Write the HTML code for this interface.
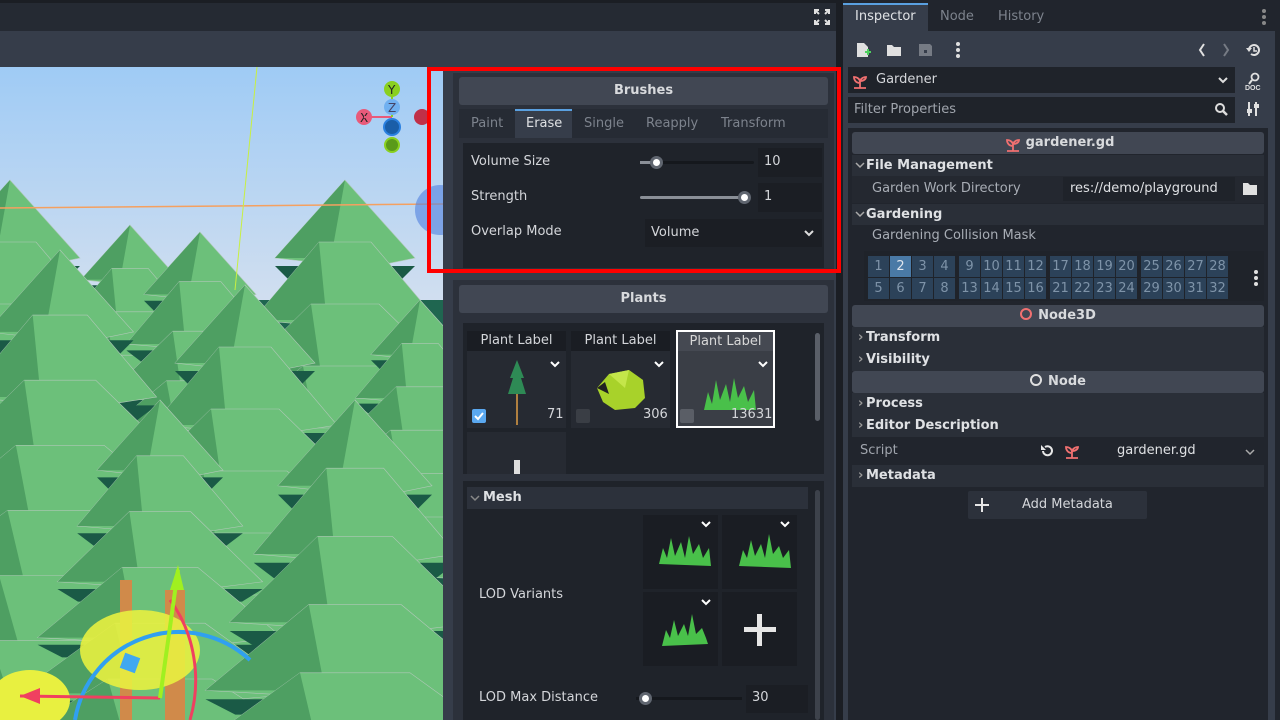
<!DOCTYPE html>
<html><head><meta charset="utf-8"><style>
*{box-sizing:border-box;margin:0;padding:0}
html{width:1280px;height:720px;overflow:hidden}
body{width:1280px;height:720px;overflow:hidden;background:#21252d;font-family:"DejaVu Sans","Liberation Sans",sans-serif;font-size:13px;color:#d4d6da;position:relative}
.a{position:absolute}
.hdr{background:#414753;border-radius:3px;text-align:center;font-weight:bold;color:#d8dadd}
.box{background:#1f232a}
.t{white-space:nowrap}
.sec{background:#2a2f38;font-weight:bold;color:#dfe1e4}
.cell{position:absolute;width:21px;height:21px;background:#2c4259;color:#7e93a8;font-size:13px;text-align:center;line-height:21px}
</style></head><body>
<div class="a" style="left:0;top:0;width:836px;height:3px;background:#1b1e24"></div>
<div class="a" style="left:0;top:3px;width:836px;height:28px;background:#252a33"></div>
<div class="a" style="left:0;top:31px;width:836px;height:36px;background:#363d4a"></div>
<svg class="a" style="left:814px;top:9px" width="16" height="16" viewBox="0 0 16 16" fill="none" stroke="#e0e0e0" stroke-width="2"><path d="M1 5V1h4M11 1h4v4M15 11v4h-4M5 15H1v-4M1 1l4 4M15 1l-4 4M15 15l-4-4M1 15l4-4"/></svg>
<svg class="a" id="vp" style="left:0;top:67px" width="443" height="653" viewBox="0 67 443 653">
<defs><linearGradient id="sky" x1="0" y1="0" x2="0" y2="1"><stop offset="0" stop-color="#9fcbf5"/><stop offset="1" stop-color="#dfe4ee"/></linearGradient></defs>
<rect x="0" y="67" width="443" height="300" fill="url(#sky)"/>
<rect x="0" y="300" width="443" height="420" fill="#1f6650"/>
<rect x="395" y="400" width="48" height="200" fill="#8fc4e8"/>
<g id="trees"></g>
<line x1="0" y1="208" x2="443" y2="204" stroke="#f5a060" stroke-width="1.5"/>
<line x1="257" y1="67" x2="235" y2="290" stroke="#c8f040" stroke-width="1"/>
<rect x="120" y="580" width="12" height="140" fill="#d08a4a"/>
<rect x="165" y="590" width="20" height="130" fill="#d08a4a"/>
<ellipse cx="140" cy="650" rx="60" ry="40" fill="#e8f040" opacity=".9"/>
<ellipse cx="30" cy="700" rx="40" ry="30" fill="#e8f040"/>
<path d="M75 720A105 105 0 0 1 250 660" stroke="#30a0f0" stroke-width="4" fill="none"/>
<path d="M170 600A100 120 0 0 1 190 720" stroke="#f04060" stroke-width="3" fill="none"/>
<line x1="20" y1="696" x2="160" y2="698" stroke="#f04060" stroke-width="3"/>
<path d="M20 696l20-8v16z" fill="#f04060"/>
<line x1="160" y1="698" x2="178" y2="570" stroke="#a0f020" stroke-width="4"/>
<path d="M178 565l-8 25h14z" fill="#a0f020"/>
<rect x="122" y="655" width="16" height="16" fill="#40a8f0" transform="rotate(20 130 663)"/>
<circle cx="364" cy="117" r="8" fill="#e85a7a"/><text x="360" y="122" font-size="12" fill="#222">X</text>
<line x1="364" y1="117" x2="392" y2="117" stroke="#e85a7a" stroke-width="2"/>
<line x1="392" y1="89" x2="392" y2="117" stroke="#8ad020" stroke-width="2"/>
<circle cx="392" cy="89" r="8" fill="#8ad020"/><text x="388" y="94" font-size="12" fill="#222">Y</text>
<circle cx="392" cy="107" r="8" fill="#70b0f0"/><text x="388" y="112" font-size="12" fill="#446">Z</text>
<circle cx="392" cy="127" r="8" fill="#1a5ea8" stroke="#2a80e0" stroke-width="2"/>
<circle cx="392" cy="145" r="7" fill="#5a9a1a" stroke="#8ad020" stroke-width="2"/>
<circle cx="422" cy="117" r="8" fill="#c03048"/>
<circle cx="440" cy="210" r="25" fill="#5080e0" opacity=".6"/>
</svg>
<script>
(function(){var g=document.getElementById('trees'),s='';
function tree(cx,y0,n,sc){for(var i=0;i<n;i++){var ty=y0+i*62*sc,h=78*sc,tw=(i==0?0:(18+i*8))*sc,bw=(70+i*22)*sc,by=ty+h;
s+='<polygon points="'+(cx-bw)+','+(by+8*sc)+' '+(cx+bw)+','+(by+8*sc)+' '+(cx+bw*0.8)+','+(by+22*sc)+' '+(cx-bw*0.8)+','+(by+22*sc)+'" fill="#1a5a46"/>';
s+='<polygon points="'+(cx-tw)+','+ty+' '+(cx+tw)+','+ty+' '+(cx+bw)+','+by+' '+(cx+bw*0.3)+','+(by+10*sc)+' '+(cx-bw)+','+by+'" fill="#6cc07a" stroke="#b0c8b8" stroke-width="0.6"/>';
s+='<polygon points="'+(cx-tw)+','+ty+' '+(cx-bw*0.2)+','+by+' '+(cx-bw)+','+by+'" fill="#4e9f62"/>';}}
tree(10,180,9,1);tree(130,225,6,0.7);tree(200,232,7,0.8);tree(345,180,9,1);tree(245,285,8,1);tree(60,250,8,1.05);tree(420,300,6,0.7);tree(160,400,6,0.9);tree(355,400,6,1.1);
g.innerHTML=s;})();
</script>
<div class="a" style="left:443px;top:67px;width:393px;height:653px;background:#363d4a"></div>
<div class="a" style="left:836px;top:0;width:7px;height:720px;background:#1b1e24"></div>
<div class="a" style="left:453px;top:73px;width:381px;height:199px;background:#2c313b"></div>
<div class="a hdr" style="left:459px;top:77px;width:369px;height:28px;line-height:28px">Brushes</div>
<div class="a" style="left:459px;top:109px;width:369px;height:29px;background:#262b34"></div>
<div class="a" style="left:515px;top:109px;width:57px;height:29px;background:#363d4a;border-top:2px solid #5aa0e0"></div>
<div class="a t" style="left:471px;top:116px;color:#7d838d">Paint</div>
<div class="a t" style="left:526px;top:116px;color:#dfe1e4">Erase</div>
<div class="a t" style="left:584px;top:116px;color:#7d838d">Single</div>
<div class="a t" style="left:646px;top:116px;color:#7d838d">Reapply</div>
<div class="a t" style="left:721px;top:116px;color:#7d838d">Transform</div>
<div class="a box" style="left:463px;top:143px;width:361px;height:125px"></div>
<div class="a t" style="left:471px;top:154px">Volume Size</div>
<div class="a" style="left:640px;top:161px;width:114px;height:3px;background:#15181d;border-radius:2px"></div>
<div class="a" style="left:640px;top:161px;width:18px;height:3px;background:#8a8f97"></div>
<div class="a" style="left:650px;top:156px;width:13px;height:13px;border-radius:50%;background:#fff;border:3px solid #606670"></div>
<div class="a" style="left:758px;top:148px;width:64px;height:29px;background:#1b1e24"></div>
<div class="a t" style="left:764px;top:154px">10</div>
<div class="a t" style="left:471px;top:189px">Strength</div>
<div class="a" style="left:640px;top:196px;width:108px;height:3px;background:#8a8f97;border-radius:2px"></div>
<div class="a" style="left:738px;top:191px;width:13px;height:13px;border-radius:50%;background:#fff;border:3px solid #606670"></div>
<div class="a" style="left:758px;top:183px;width:64px;height:29px;background:#1b1e24"></div>
<div class="a t" style="left:764px;top:189px">1</div>
<div class="a t" style="left:471px;top:224px">Overlap Mode</div>
<div class="a" style="left:645px;top:219px;width:177px;height:28px;background:#1b1e24"></div>
<div class="a t" style="left:651px;top:225px">Volume</div>
<svg class="a" style="left:803px;top:228px" width="12" height="10"><path d="M2 3l4 4 4-4" stroke="#ddd" stroke-width="2" fill="none"/></svg>
<div class="a" style="left:427px;top:67px;width:414px;height:206px;border:4px solid #f00"></div>
<div class="a" style="left:453px;top:280px;width:381px;height:440px;background:#2c313b"></div>
<div class="a hdr" style="left:459px;top:285px;width:369px;height:28px;line-height:28px">Plants</div>
<div class="a box" style="left:463px;top:323px;width:361px;height:151px"></div>
<div class="a" style="left:467px;top:331px;width:99px;height:97px;background:#262a32"></div>
<div class="a" style="left:467px;top:331px;width:99px;height:20px;background:#1a1d23;text-align:center;line-height:20px">Plant Label</div>
<div class="a" style="left:571px;top:331px;width:99px;height:97px;background:#262a32"></div>
<div class="a" style="left:571px;top:331px;width:99px;height:20px;background:#1a1d23;text-align:center;line-height:20px">Plant Label</div>
<div class="a" style="left:676px;top:330px;width:99px;height:98px;background:#3a3e46;border:2px solid #fff"></div>
<div class="a" style="left:678px;top:332px;width:95px;height:19px;background:#454952;text-align:center;line-height:19px;color:#d8d8d8">Plant Label</div>
<svg class="a" style="left:549px;top:360px" width="12" height="10"><path d="M2 2l4 4 4-4" stroke="#fff" stroke-width="2" fill="none"/></svg>
<svg class="a" style="left:653px;top:360px" width="12" height="10"><path d="M2 2l4 4 4-4" stroke="#fff" stroke-width="2" fill="none"/></svg>
<svg class="a" style="left:757px;top:360px" width="12" height="10"><path d="M2 2l4 4 4-4" stroke="#fff" stroke-width="2" fill="none"/></svg>
<svg class="a" style="left:505px;top:360px" width="24" height="66"><rect x="11" y="30" width="2" height="35" fill="#b08040"/><path d="M12 0L5 18 8 18 3 34 21 34 16 18 19 18z" fill="#2e8a55"/></svg>
<svg class="a" style="left:595px;top:368px" width="52" height="44"><path d="M2 20L14 6 34 2 48 12 50 30 40 40 20 42 8 34z" fill="#a8d22a"/><path d="M2 20l8-6 4 12z" fill="#222"/><path d="M14 6 34 2 30 20z" fill="#c4e64a"/></svg>
<svg class="a" style="left:702px;top:372px" width="56" height="40"><path d="M2 38L6 20 10 32 14 8 18 28 24 12 28 30 32 6 36 26 42 14 46 30 52 18 54 38z" fill="#49c04a"/></svg>
<div class="a" style="left:472px;top:409px;width:14px;height:14px;background:#5aa8f0;border-radius:2px"></div>
<svg class="a" style="left:473px;top:410px" width="12" height="12"><path d="M2 6l3 3 5-6" stroke="#fff" stroke-width="2" fill="none"/></svg>
<div class="a t" style="left:547px;top:407px">71</div>
<div class="a" style="left:576px;top:409px;width:14px;height:14px;background:#3a3e45;border-radius:2px"></div>
<div class="a t" style="left:643px;top:407px">306</div>
<div class="a" style="left:680px;top:409px;width:14px;height:14px;background:#5a5e66;border-radius:2px"></div>
<div class="a t" style="left:731px;top:407px">13631</div>
<div class="a" style="left:467px;top:432px;width:99px;height:42px;background:#262a32"></div>
<div class="a" style="left:514px;top:460px;width:6px;height:14px;background:#ddd"></div>
<div class="a" style="left:815px;top:333px;width:5px;height:88px;background:#5a5f68;border-radius:3px"></div>
<div class="a box" style="left:463px;top:481px;width:361px;height:239px"></div>
<div class="a" style="left:467px;top:487px;width:341px;height:22px;background:#2c313b"></div>
<svg class="a" style="left:470px;top:494px" width="10" height="8"><path d="M1 2l4 4 4-4" stroke="#888" stroke-width="1.5" fill="none"/></svg>
<div class="a t" style="left:483px;top:490px;font-weight:bold;color:#dfe1e4">Mesh</div>
<div class="a" style="left:815px;top:490px;width:5px;height:230px;background:#3d424b;border-radius:3px"></div>
<div class="a" style="left:643px;top:515px;width:75px;height:74px;background:#1a1d23"></div>
<div class="a" style="left:722px;top:515px;width:75px;height:74px;background:#1a1d23"></div>
<div class="a" style="left:643px;top:592px;width:75px;height:74px;background:#1a1d23"></div>
<div class="a" style="left:722px;top:592px;width:75px;height:74px;background:#1a1d23"></div>
<svg class="a" style="left:700px;top:520px" width="12" height="10"><path d="M2 2l4 4 4-4" stroke="#fff" stroke-width="2" fill="none"/></svg>
<svg class="a" style="left:779px;top:520px" width="12" height="10"><path d="M2 2l4 4 4-4" stroke="#fff" stroke-width="2" fill="none"/></svg>
<svg class="a" style="left:700px;top:598px" width="12" height="10"><path d="M2 2l4 4 4-4" stroke="#fff" stroke-width="2" fill="none"/></svg>
<svg class="a" style="left:657px;top:532px" width="56" height="40"><path d="M2 32L6 16 10 26 14 6 18 24 24 10 28 26 32 4 36 22 42 12 46 26 52 16 54 34z" fill="#49c04a"/></svg>
<svg class="a" style="left:737px;top:532px" width="56" height="40"><path d="M2 34L6 18 10 26 14 8 18 24 24 12 28 26 32 2 36 22 42 14 46 26 52 18 54 36z" fill="#49c04a"/></svg>
<svg class="a" style="left:660px;top:610px" width="50" height="40"><path d="M2 36L6 20 10 28 14 10 18 26 24 14 28 26 32 4 36 24 42 18 46 28 48 34z" fill="#49c04a"/></svg>
<div class="a" style="left:744px;top:627px;width:32px;height:5px;background:#e6e6e6"></div>
<div class="a" style="left:757px;top:614px;width:5px;height:32px;background:#e6e6e6"></div>
<div class="a t" style="left:479px;top:587px">LOD Variants</div>
<div class="a t" style="left:479px;top:690px">LOD Max Distance</div>
<div class="a" style="left:636px;top:697px;width:106px;height:3px;background:#15181d"></div>
<div class="a" style="left:639px;top:692px;width:13px;height:13px;border-radius:50%;background:#fff;border:3px solid #606670"></div>
<div class="a" style="left:746px;top:685px;width:62px;height:28px;background:#1b1e24"></div>
<div class="a t" style="left:752px;top:690px">30</div>
<div class="a" style="left:843px;top:0;width:437px;height:720px;background:#21252d"></div>
<div class="a" style="left:843px;top:31px;width:432px;height:689px;background:#363d4a"></div>
<div class="a" style="left:843px;top:3px;width:85px;height:28px;background:#363d4a;border-top:2px solid #5aa0e0"></div>
<div class="a t" style="left:855px;top:9px;color:#e0e2e5">Inspector</div>
<div class="a t" style="left:940px;top:9px;color:#7d838d">Node</div>
<div class="a t" style="left:998px;top:9px;color:#7d838d">History</div>
<div class="a" style="left:1262px;top:9px;width:4px;height:4px;border-radius:2px;background:#888;box-shadow:0 6px 0 #888,0 12px 0 #888"></div>
<svg class="a" style="left:855px;top:42px" width="16" height="16"><path d="M2 1h7l4 4v10H2z" fill="#e0e0e0"/><path d="M10 10h6M13 7v6" stroke="#4fd060" stroke-width="2"/></svg>
<svg class="a" style="left:886px;top:43px" width="16" height="14"><path d="M1 2h5l2 2h7v9H1z" fill="#e0e0e0"/></svg>
<svg class="a" style="left:918px;top:43px" width="15" height="14"><path d="M1 1h11l2 2v10H1z" fill="#767b84"/><rect x="6" y="7" width="3" height="3" fill="#363d4a"/></svg>
<div class="a" style="left:956px;top:42px;width:4px;height:4px;border-radius:2px;background:#e0e0e0;box-shadow:0 6px 0 #e0e0e0,0 12px 0 #e0e0e0"></div>
<svg class="a" style="left:1197px;top:42px" width="10" height="16"><path d="M7 2L3 8l4 6" stroke="#e0e0e0" stroke-width="2" fill="none"/></svg>
<svg class="a" style="left:1221px;top:42px" width="10" height="16"><path d="M3 2l4 6-4 6" stroke="#767b84" stroke-width="2" fill="none"/></svg>
<svg class="a" style="left:1246px;top:42px" width="16" height="16"><path d="M3 8a5 5 0 1 1 2 4" stroke="#e0e0e0" stroke-width="2" fill="none"/><path d="M0 6l3 4 3-4z" fill="#e0e0e0"/><path d="M8 5v4h3" stroke="#e0e0e0" stroke-width="1.5" fill="none"/></svg>
<div class="a" style="left:848px;top:67px;width:387px;height:26px;background:#1f232a"></div>
<svg class="a" style="left:852px;top:73px" width="16" height="16"><path d="M8 6v9M2 15h12M8 10C4 10 2 7 2 4c3 0 6 2 6 5M8 8c1-3 4-4 6-4 0 2-2 4-6 4" stroke="#f07070" stroke-width="1.8" fill="none"/></svg>
<div class="a t" style="left:876px;top:72px">Gardener</div>
<svg class="a" style="left:1217px;top:76px" width="12" height="10"><path d="M2 2l4 4 4-4" stroke="#ddd" stroke-width="2" fill="none"/></svg>
<svg class="a" style="left:1245px;top:72px" width="18" height="18"><circle cx="10" cy="5" r="3.5" stroke="#e0e0e0" stroke-width="1.8" fill="none"/><path d="M7 8l-3 4" stroke="#e0e0e0" stroke-width="2"/><text x="0" y="18" font-size="7" font-weight="bold" fill="#e0e0e0" font-family="Liberation Sans">DOC</text></svg>
<div class="a" style="left:848px;top:97px;width:387px;height:26px;background:#1f232a"></div>
<div class="a t" style="left:854px;top:102px;color:#a0a5ad">Filter Properties</div>
<svg class="a" style="left:1214px;top:102px" width="14" height="14"><circle cx="6" cy="6" r="4" stroke="#ddd" stroke-width="2" fill="none"/><path d="M9 9l4 4" stroke="#ddd" stroke-width="2.5"/></svg>
<svg class="a" style="left:1246px;top:101px" width="14" height="16"><path d="M3 1v14M10 1v14" stroke="#e0e0e0" stroke-width="2"/><rect x="1" y="8" width="5" height="4" fill="#e0e0e0"/><rect x="8" y="3" width="5" height="4" fill="#e0e0e0"/></svg>
<div class="a" style="left:848px;top:128px;width:420px;height:592px;background:#21252d"></div>
<div class="a hdr" style="left:852px;top:132px;width:412px;height:22px;line-height:22px;padding-left:24px">gardener.gd</div>
<svg class="a" style="left:1005px;top:136px" width="16" height="16"><path d="M8 6v9M2 15h12M8 10C4 10 2 7 2 4c3 0 6 2 6 5M8 8c1-3 4-4 6-4 0 2-2 4-6 4" stroke="#f07070" stroke-width="1.8" fill="none"/></svg>
<div class="a sec" style="left:852px;top:155px;width:412px;height:21px;padding-left:14px;line-height:21px">File Management</div>
<div class="a" style="left:852px;top:176px;width:412px;height:27px;background:#242830"></div>
<div class="a t" style="left:872px;top:181px;color:#a8adb5">Garden Work Directory</div>
<div class="a" style="left:1063px;top:177px;width:172px;height:24px;background:#1f232a"></div>
<div class="a t" style="left:1070px;top:181px;color:#dfe1e4">res://demo/playground</div>
<svg class="a" style="left:1242px;top:182px" width="16" height="14"><path d="M1 1h5l2 2h7v10H1z" fill="#e0e0e0"/></svg>
<div class="a sec" style="left:852px;top:204px;width:412px;height:21px;padding-left:14px;line-height:21px">Gardening</div>
<svg class="a" style="left:855px;top:161px" width="10" height="8"><path d="M1 2l4 4 4-4" stroke="#aaa" stroke-width="1.5" fill="none"/></svg>
<svg class="a" style="left:855px;top:210px" width="10" height="8"><path d="M1 2l4 4 4-4" stroke="#aaa" stroke-width="1.5" fill="none"/></svg>
<div class="a t" style="left:872px;top:228px;color:#a8adb5">Gardening Collision Mask</div>
<div class="a" style="left:864px;top:251px;width:400px;height:50px;background:#1f232a"></div>
<div id="grid"></div>
<div class="a" style="left:1254px;top:270px;width:4px;height:4px;border-radius:2px;background:#e0e0e0;box-shadow:0 6px 0 #e0e0e0,0 12px 0 #e0e0e0"></div>
<div class="a hdr" style="left:852px;top:305px;width:412px;height:22px;line-height:22px"><span style="display:inline-block;width:12px;height:12px;border:2px solid #f07070;border-radius:50%;vertical-align:-1px;margin-right:6px"></span>Node3D</div>
<div class="a sec" style="left:852px;top:327px;width:412px;height:44px;padding-left:14px;line-height:22px">Transform<br>Visibility</div>
<div class="a hdr" style="left:852px;top:371px;width:412px;height:22px;line-height:22px"><span style="display:inline-block;width:12px;height:12px;border:2px solid #e0e0e0;border-radius:50%;vertical-align:-1px;margin-right:6px"></span>Node</div>
<div class="a sec" style="left:852px;top:393px;width:412px;height:44px;padding-left:14px;line-height:22px">Process<br>Editor Description</div>
<div class="a t" style="left:858px;top:327px;color:#999;font-size:13px;font-weight:bold;line-height:22px">&#x203A;<br>&#x203A;</div>
<div class="a t" style="left:858px;top:393px;color:#999;font-size:13px;font-weight:bold;line-height:22px">&#x203A;<br>&#x203A;</div>
<div class="a t" style="left:860px;top:443px;color:#a0a5ad">Script</div>
<svg class="a" style="left:1040px;top:444px" width="14" height="14"><path d="M3 7a4.5 4.5 0 1 0 2-4" stroke="#e8e8e8" stroke-width="2" fill="none"/><path d="M1 1v5h5" fill="#e8e8e8"/></svg>
<svg class="a" style="left:1064px;top:443px" width="16" height="16"><path d="M8 6v9M2 15h12M8 10C4 10 2 7 2 4c3 0 6 2 6 5M8 8c1-3 4-4 6-4 0 2-2 4-6 4" stroke="#f07070" stroke-width="1.8" fill="none"/></svg>
<div class="a t" style="left:1117px;top:443px;color:#dfe1e4">gardener.gd</div>
<svg class="a" style="left:1245px;top:448px" width="10" height="8"><path d="M1 2l4 4 4-4" stroke="#aaa" stroke-width="1.5" fill="none"/></svg>
<div class="a sec" style="left:852px;top:465px;width:412px;height:22px;padding-left:14px;line-height:22px">Metadata</div>
<div class="a t" style="left:858px;top:465px;color:#999;font-size:13px;font-weight:bold;line-height:22px">&#x203A;</div>
<div class="a" style="left:968px;top:491px;width:179px;height:28px;background:#2c313b;border-radius:2px"></div>
<div class="a" style="left:975px;top:504px;width:14px;height:2px;background:#e6e6e6"></div>
<div class="a" style="left:981px;top:498px;width:2px;height:14px;background:#e6e6e6"></div>
<div class="a t" style="left:1022px;top:497px;color:#d4d6da">Add Metadata</div>
<div class="a" style="left:1275px;top:31px;width:5px;height:689px;background:#21252d"></div>
<script>
(function(){var h='',gx=[868,959,1050,1141];for(var r=0;r<2;r++)for(var g=0;g<4;g++)for(var c=0;c<4;c++){var n=g*8+r*4+c+1,x=gx[g]+c*22,y=256+r*22;
h+='<div class="cell" style="left:'+x+'px;top:'+y+'px;'+(n==2?'background:#4a7aa6;color:#e0e6ee':'')+'">'+n+'</div>';}
document.getElementById('grid').innerHTML=h;})();
</script>
</body></html>
